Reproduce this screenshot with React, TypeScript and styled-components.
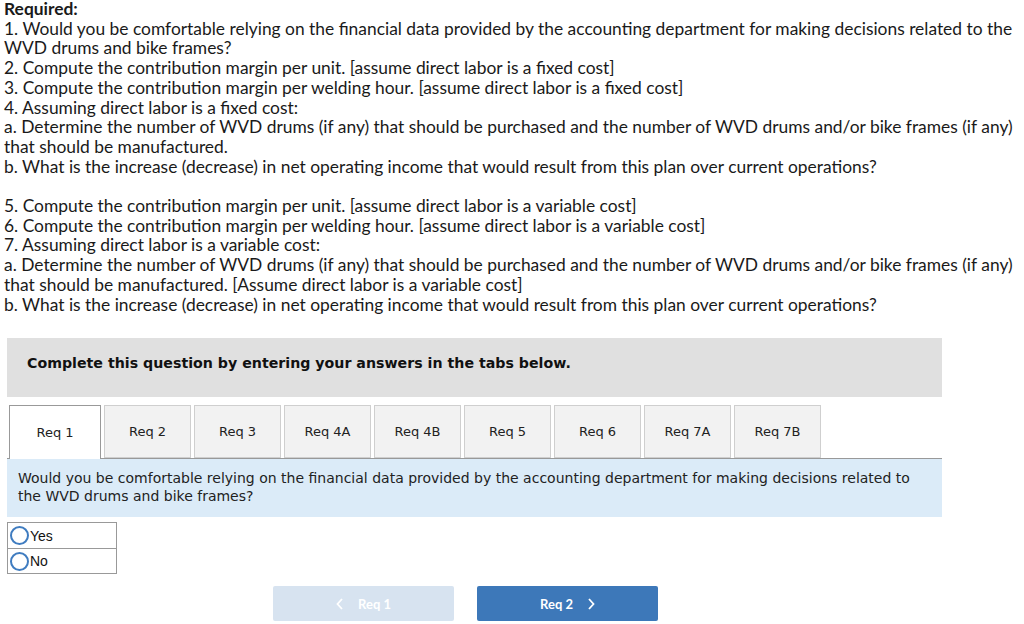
import React from 'react';
import styled, { createGlobalStyle } from 'styled-components';

const GlobalStyle = createGlobalStyle`
  html, body {
    margin: 0;
    padding: 0;
    background: #fff;
  }
  body {
    padding: 0 4px;
    font-family: Lato, "Noto Sans", sans-serif;
    color: #222;
  }
`;

const Instructions = styled.div`
  margin-top: -1px;
  font-size: 17.4px;
  line-height: 19.7px;
  color: #1a1a1a;
`;

const Heading = styled.div`
  font-weight: 700;
`;

const Line = styled.div<{ $gap?: boolean }>`
  margin-top: ${(p) => (p.$gap ? '19.7px' : '0')};
`;

const Question = styled.div`
  margin: 24px 0 0 3px;
  width: 935px;
  font-family: "DejaVu Sans", Verdana, sans-serif;
`;

const Banner = styled.div`
  background: #e0e0e0;
  height: 59px;
  box-sizing: border-box;
  padding: 17px 0 0 20px;
  font-size: 14.2px;
  font-weight: 700;
  color: #111;
`;

const TabBar = styled.div`
  display: flex;
  gap: 3px;
  margin-top: 8px;
  padding-left: 2px;
`;

const Tab = styled.div<{ $active?: boolean }>`
  box-sizing: border-box;
  width: ${(p) => (p.$active ? '92px' : '87px')};
  height: ${(p) => (p.$active ? '54px' : '53px')};
  margin-bottom: ${(p) => (p.$active ? '-1px' : '0')};
  display: flex;
  align-items: center;
  justify-content: center;
  font-size: 13px;
  color: #222;
  background: ${(p) => (p.$active ? '#fff' : '#f2f2f2')};
  border: 1px solid ${(p) => (p.$active ? '#999' : '#cfcfcf')};
  border-bottom: ${(p) => (p.$active ? 'none' : '1px solid #cfcfcf')};
  position: relative;
  z-index: ${(p) => (p.$active ? 1 : 0)};
`;

const Panel = styled.div`
  background: #dbebf8;
  border-top: 1px solid #999;
  padding: 10px 11px 12px;
  font-size: 14px;
  line-height: 18px;
  color: #222;
`;

const Choices = styled.div`
  margin-top: 5px;
  width: 110px;
  border: 1px solid #999;
  box-sizing: border-box;
`;

const Choice = styled.label<{ $first?: boolean }>`
  display: flex;
  align-items: center;
  height: 25px;
  font-family: "Liberation Sans", Arial, sans-serif;
  font-size: 14px;
  color: #111;
  border-top: ${(p) => (p.$first ? 'none' : '1px solid #999')};
  padding-left: 2px;
  box-sizing: border-box;
`;

const Radio = styled.span`
  width: 15px;
  height: 15px;
  border: 2px solid #3f7cc0;
  border-radius: 50%;
  margin-right: 1px;
  box-sizing: content-box;
  flex: none;
`;

const Nav = styled.div`
  display: flex;
  gap: 23px;
  margin-top: 12px;
  padding-left: 266px;
`;

const NavButton = styled.button<{ $disabled?: boolean }>`
  width: 181px;
  height: 35px;
  border: none;
  border-radius: 2px;
  background: ${(p) => (p.$disabled ? '#d7e3f0' : '#3d78b9')};
  color: #fff;
  font-family: Lato, "Noto Sans", sans-serif;
  font-weight: 700;
  font-size: 13px;
  display: flex;
  align-items: center;
  justify-content: center;
  gap: 14px;
  padding: 0;
`;

const Chevron = ({ dir }: { dir: 'left' | 'right' }) => (
  <svg width="8" height="12" viewBox="0 0 8 12">
    <path
      d={dir === 'left' ? 'M6 1 L1.5 6 L6 11' : 'M2 1 L6.5 6 L2 11'}
      fill="none"
      stroke="#fff"
      strokeWidth="1.8"
    />
  </svg>
);

const tabs = ['Req 1', 'Req 2', 'Req 3', 'Req 4A', 'Req 4B', 'Req 5', 'Req 6', 'Req 7A', 'Req 7B'];

export default function App() {
  return (
    <>
      <GlobalStyle />
      <Instructions>
        <Heading>Required:</Heading>
        <Line>
          1. Would you be comfortable relying on the financial data provided by the accounting department for making decisions related to the WVD drums and bike frames?
        </Line>
        <Line>2. Compute the contribution margin per unit. [assume direct labor is a fixed cost]</Line>
        <Line>3. Compute the contribution margin per welding hour. [assume direct labor is a fixed cost]</Line>
        <Line>4. Assuming direct labor is a fixed cost:</Line>
        <Line>
          a. Determine the number of WVD drums (if any) that should be purchased and the number of WVD drums and/or bike frames (if any) that should be manufactured.
        </Line>
        <Line>b. What is the increase (decrease) in net operating income that would result from this plan over current operations?</Line>
        <Line $gap>5. Compute the contribution margin per unit. [assume direct labor is a variable cost]</Line>
        <Line>6. Compute the contribution margin per welding hour. [assume direct labor is a variable cost]</Line>
        <Line>7. Assuming direct labor is a variable cost:</Line>
        <Line>
          a. Determine the number of WVD drums (if any) that should be purchased and the number of WVD drums and/or bike frames (if any) that should be manufactured. [Assume direct labor is a variable cost]
        </Line>
        <Line>b. What is the increase (decrease) in net operating income that would result from this plan over current operations?</Line>
      </Instructions>

      <Question>
        <Banner>Complete this question by entering your answers in the tabs below.</Banner>
        <TabBar>
          {tabs.map((t, i) => (
            <Tab key={t} $active={i === 0}>
              {t}
            </Tab>
          ))}
        </TabBar>
        <Panel>
          Would you be comfortable relying on the financial data provided by the accounting department for making decisions related to the WVD drums and bike frames?
        </Panel>
        <Choices>
          <Choice $first>
            <Radio />
            Yes
          </Choice>
          <Choice>
            <Radio />
            No
          </Choice>
        </Choices>
        <Nav>
          <NavButton $disabled>
            <Chevron dir="left" />
            Req 1
          </NavButton>
          <NavButton>
            Req 2
            <Chevron dir="right" />
          </NavButton>
        </Nav>
      </Question>
    </>
  );
}
